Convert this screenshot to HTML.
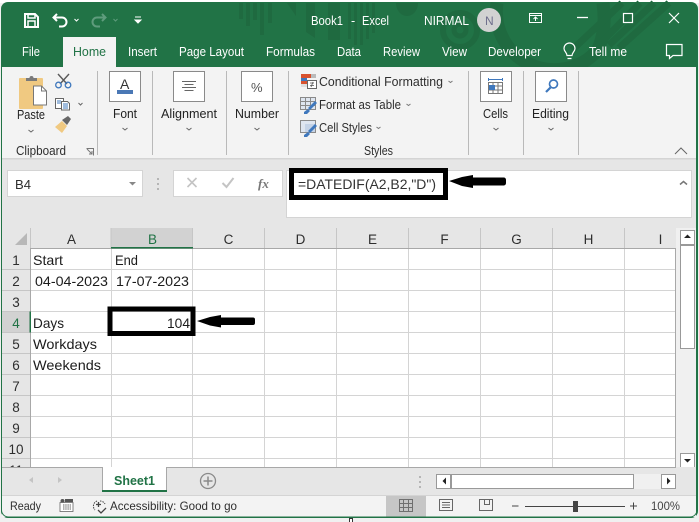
<!DOCTYPE html>
<html lang="en"><head><meta charset="utf-8"><title>Book1 - Excel</title>
<style>
html,body{margin:0;padding:0;background:#f0f0f0;overflow:hidden}
svg{display:block}
text{font-family:"Liberation Sans",sans-serif;font-size:12.5px;fill:#2e2e2e;white-space:pre}
.w text,text.w{fill:#fff}
.cell text{font-size:14px;fill:#1c1c1c}
.h text{font-size:13.5px;fill:#2e2e2e;text-anchor:middle}
</style></head><body>
<svg width="699" height="522" viewBox="0 0 699 522" xmlns="http://www.w3.org/2000/svg">
<rect width="699" height="522" fill="#f0f0f0"/>
<rect x="0" y="0" width="699" height="3" fill="#ffffff"/>
<rect x="1" y="2" width="697" height="516" rx="7" fill="#217346"/>
<rect x="2" y="67" width="694" height="449" fill="#e6e6e6"/>

<!-- title pattern -->
<g fill="#1f6a40">
<rect x="239" y="3" width="4" height="16"/><rect x="246" y="3" width="4" height="23"/><rect x="253" y="3" width="4" height="17"/><rect x="260" y="3" width="4" height="32"/><rect x="268" y="3" width="4" height="20"/>
<path d="M287 3h9v13z"/><path d="M306 3h9v35l-9-6z"/><rect x="328" y="3" width="12" height="37"/>
<rect x="348" y="3" width="3" height="36"/><rect x="354" y="3" width="3" height="42"/><rect x="360" y="3" width="3" height="42"/><rect x="366" y="3" width="3" height="36"/><rect x="372" y="3" width="3" height="30"/>
<path d="M396 3h22a11 13 0 0 1-22 0z"/>
</g>
<g fill="none" stroke="#1f6a40">
<circle cx="460" cy="30" r="17" stroke-width="6"/><circle cx="460" cy="30" r="6" stroke-width="5"/>
<path d="M497 3a58 58 0 0 0 100 48q10-20 6-48" stroke-width="13"/>
<path d="M622 3l-50 47M640 3l-54 55M654 3l-45 42M669 3l-50 45" stroke-width="7"/>
</g>

<!-- qat -->
<g fill="none" stroke="#fff">
<path d="M25 14h10l3 3v10H25z" stroke-width="2"/><path d="M28 14.500h7v3.500h-7zM28 26v-5h7v5" stroke-width="1.500"/>
<path d="M57 14l-3.500 3.500 3.500 3.500M54 17.500h8a4.500 4.500 0 0 1 0 9h-3" stroke-width="2"/>
<path d="M74.500 19l2 2 2-2" stroke-width="1"/>
</g>
<g fill="none" stroke="#5f9c7d">
<path d="M102 14l3.500 3.500-3.500 3.500M105 17.500h-8a4.500 4.500 0 0 0 0 9h3" stroke-width="2"/>
<path d="M113.500 19l2 2 2-2" stroke-width="1"/>
</g>
<path d="M135 17h6M135 20h6l-3 3z" stroke="#fff" fill="#fff" stroke-width="1"/>

<!-- title -->
<g class="w">
<text x="311" y="25" textLength="32" lengthAdjust="spacingAndGlyphs">Book1</text>
<text x="351" y="25">-</text>
<text x="362" y="25" textLength="27" lengthAdjust="spacingAndGlyphs">Excel</text>
<text x="424" y="25" textLength="45" lengthAdjust="spacingAndGlyphs">NIRMAL</text>
</g>
<circle cx="489" cy="20" r="12" fill="#d2d2d2"/>
<text x="485" y="25" style="font-size:12px;fill:#6e6e8c">N</text>
<g fill="none" stroke="#fff" stroke-width="1">
<path d="M529.500 13.500h12v9h-12zM529.500 15.500h12M535.500 21v-4M533.500 19l2-2 2 2"/>
<path d="M577 17.500h11" stroke-width="1.300"/>
<rect x="623.500" y="13.500" width="9" height="9" stroke-width="1.200"/>
<path d="M669 13l10 10M679 13l-10 10" stroke-width="1.200"/>
<path d="M666.500 44.500h15.500v11h-9l-3.500 3v-3h-3z" stroke-width="1.200"/>
<path d="M567 55.500c0-3-3-4-3-7a5.500 5.500 0 0 1 11 0c0 3-3 4-3 7zM567.500 58.500h4" stroke-width="1.200"/>
</g>

<!-- tabs -->
<rect x="63" y="37" width="53" height="31" fill="#f3f3f3"/>
<g class="w">
<text x="22" y="56" textLength="18" lengthAdjust="spacingAndGlyphs">File</text>
<text x="128" y="56" textLength="29" lengthAdjust="spacingAndGlyphs">Insert</text>
<text x="179" y="56" textLength="65" lengthAdjust="spacingAndGlyphs">Page Layout</text>
<text x="266" y="56" textLength="49" lengthAdjust="spacingAndGlyphs">Formulas</text>
<text x="337" y="56" textLength="24" lengthAdjust="spacingAndGlyphs">Data</text>
<text x="383" y="56" textLength="37" lengthAdjust="spacingAndGlyphs">Review</text>
<text x="442" y="56" textLength="25" lengthAdjust="spacingAndGlyphs">View</text>
<text x="488" y="56" textLength="53" lengthAdjust="spacingAndGlyphs">Developer</text>
<text x="589" y="56" textLength="38" lengthAdjust="spacingAndGlyphs">Tell me</text>
</g>
<text x="73" y="56" textLength="33" lengthAdjust="spacingAndGlyphs" style="fill:#217346">Home</text>

<!-- ribbon -->
<rect x="2" y="67" width="694" height="92" fill="#f3f3f3"/>
<rect x="63" y="66" width="53" height="3" fill="#f3f3f3"/>
<rect x="2" y="158" width="694" height="1.500" fill="#d4d4d4"/>
<g fill="#b9b9b9">
<rect x="97" y="71" width="1" height="84"/><rect x="152" y="71" width="1" height="84"/><rect x="226" y="71" width="1" height="84"/><rect x="288" y="71" width="1" height="84"/><rect x="468" y="71" width="1" height="84"/><rect x="523" y="71" width="1" height="84"/><rect x="578" y="71" width="1" height="84"/>
</g>

<!-- paste -->
<rect x="19" y="78" width="24" height="31" rx="1" fill="#f0c981"/>
<path d="M26 81v-3h3.500a2 2 0 0 1 4 0H37v3z" fill="#7a7a7a"/>
<path d="M33.500 86h8l5 5v14h-13z" fill="#fff" stroke="#777" stroke-width="1"/>
<path d="M41.500 86v5h5" fill="none" stroke="#777"/>
<!-- scissors -->
<g fill="none" stroke="#5a5a5a" stroke-width="1.400"><path d="M58 74l9 10M69 74l-9 10"/></g>
<g fill="none" stroke="#3f78bd" stroke-width="1.300"><circle cx="58.500" cy="85" r="2.800"/><circle cx="68" cy="85" r="2.800"/></g>
<!-- copy -->
<g fill="#fff" stroke="#666" stroke-width="1"><path d="M55.500 98.500h8l0 10h-8z"/><path d="M61.500 101.500h6l2 2v6.500h-8z"/></g>
<path d="M57 101h4M57 103h4M63 104h5M63 106h5M63 108h5" stroke="#3f78bd" stroke-width="1"/>
<path d="M78.500 103l2 2 2-2" fill="none" stroke="#666"/>
<!-- painter -->
<path d="M55 127l7-6 5 5-5 7z" fill="#f0c981"/>
<path d="M62 120l6-4 3 3-4 6z" fill="#666"/>

<text x="17" y="119" textLength="28" lengthAdjust="spacingAndGlyphs" style="fill:#222">Paste</text>
<path d="M28.500 130l2.500 2 2.500-2" fill="none" stroke="#666"/>
<text x="16" y="155" textLength="50" lengthAdjust="spacingAndGlyphs">Clipboard</text>
<path d="M86.500 148.500h7v7M87 149l5 5M92 151v3h-3" fill="none" stroke="#777"/>

<!-- big buttons -->
<g fill="#fff" stroke="#8a8a8a" stroke-width="1">
<rect x="109.500" y="71.500" width="31" height="30"/>
<rect x="173.500" y="71.500" width="31" height="30"/>
<rect x="241.500" y="71.500" width="31" height="30"/>
<rect x="480.500" y="71.500" width="31" height="30"/>
<rect x="535.500" y="71.500" width="31" height="30"/>
</g>
<text x="120" y="89" style="font-size:14px;fill:#333">A</text>
<rect x="117" y="90" width="16" height="4" fill="#4a78b5"/>
<path d="M182 81.500h14M184.500 84.500h9M182 87.500h14M184.500 90.500h9" stroke="#666" stroke-width="1"/>
<text x="251" y="92" style="font-size:13px;fill:#555">%</text>
<!-- cells icon -->
<g fill="none" stroke="#777" stroke-width="1"><path d="M488.500 82.500h14v11h-14zM488.500 86h14M488.500 90h14M493 82.500v11M498 82.500v11"/><path d="M488.500 79.500h14M488.500 78v3M502.500 78v3" stroke="#3f78bd"/></g>
<rect x="489" y="85" width="6" height="5" fill="#3f78bd"/>
<!-- search -->
<circle cx="553.500" cy="84" r="4" fill="none" stroke="#3f78bd" stroke-width="1.700"/>
<path d="M550.500 87.500l-4.500 4.500" stroke="#3f78bd" stroke-width="2.200"/>

<text x="113" y="118" textLength="24" lengthAdjust="spacingAndGlyphs" style="fill:#222">Font</text>
<text x="161" y="118" textLength="56" lengthAdjust="spacingAndGlyphs" style="fill:#222">Alignment</text>
<text x="235" y="118" textLength="44" lengthAdjust="spacingAndGlyphs" style="fill:#222">Number</text>
<text x="483" y="118" textLength="25" lengthAdjust="spacingAndGlyphs" style="fill:#222">Cells</text>
<text x="532" y="118" textLength="37" lengthAdjust="spacingAndGlyphs" style="fill:#222">Editing</text>
<g fill="none" stroke="#666"><path d="M122.500 128l2.500 2 2.500-2M186.500 128l2.500 2 2.500-2M254.500 128l2.500 2 2.500-2M493.500 128l2.500 2 2.500-2M548.500 128l2.500 2 2.500-2"/>
<path d="M448.500 81l2 1.500 2-1.500M406.500 104l2 1.500 2-1.500M376.500 127l2 1.500 2-1.500" stroke="#777"/></g>

<!-- styles icons -->
<rect x="301" y="74" width="10" height="4" fill="#d8522f"/><rect x="311" y="74" width="5" height="4" fill="#bbb"/>
<rect x="301" y="78" width="6" height="3" fill="#3f78bd"/><rect x="301" y="81" width="6" height="3" fill="#d8522f"/><rect x="301" y="84" width="6" height="3" fill="#ddd"/>
<rect x="307.500" y="80.500" width="9" height="8" fill="#fff" stroke="#666"/>
<path d="M310 83h4M310 85.500h4M311 87l2-5" stroke="#555" stroke-width=".8" fill="none"/>
<g fill="#dfe6f0" stroke="#8a8a8a" stroke-width="1"><rect x="300.500" y="97.500" width="15" height="12"/><rect x="300.500" y="120.500" width="15" height="12"/></g>
<path d="M300.500 101.500h15M300.500 105.500h15M305.500 97.500v12M310.500 97.500v12" stroke="#8a8a8a" fill="none"/>
<path d="M305 124h10v8h-10z" fill="#c5d3e6"/>
<path d="M308 108l7-7 2 2-7 7zM304 112l4-3 2 2-3 3h-3zM308 131l7-7 2 2-7 7zM304 135l4-3 2 2-3 3h-3z" fill="#3f78bd"/>
<text x="319" y="86" textLength="124" lengthAdjust="spacingAndGlyphs">Conditional Formatting</text>
<text x="319" y="109" textLength="82" lengthAdjust="spacingAndGlyphs">Format as Table</text>
<text x="319" y="132" textLength="53" lengthAdjust="spacingAndGlyphs">Cell Styles</text>
<text x="364" y="155" textLength="29" lengthAdjust="spacingAndGlyphs">Styles</text>
<path d="M675 154l6-6 6 6" fill="none" stroke="#666" stroke-width="1"/>

<!-- formula bar -->
<rect x="7.500" y="170.500" width="135" height="26" fill="#fff" stroke="#d4d4d4"/>
<text x="15" y="189" textLength="16" lengthAdjust="spacingAndGlyphs" style="font-size:13px">B4</text>
<path d="M129 182h7l-3.500 3.500z" fill="#888"/>
<path d="M158 178v2M158 183v2M158 188v2" stroke="#b5b5b5" stroke-width="2"/>
<rect x="173.500" y="170.500" width="109" height="26" fill="#fff" stroke="#d4d4d4"/>
<path d="M187.500 178l9 9M196.500 178l-9 9" stroke="#c4c4c4" stroke-width="1.600"/>
<path d="M222.500 183l4 4 7-9" fill="none" stroke="#c4c4c4" stroke-width="2"/>
<text x="258" y="188" style="font-family:'Liberation Serif',serif;font-style:italic;font-weight:bold;font-size:13px;fill:#777">fx</text>
<rect x="286.500" y="170.500" width="405" height="47" fill="#fff" stroke="#d4d4d4"/>
<path d="M680 184.500l3.500-3 3.500 3" fill="none" stroke="#777" stroke-width="1.500"/>
<text x="298" y="189" textLength="138" lengthAdjust="spacingAndGlyphs" style="font-size:14px;fill:#333">=DATEDIF(A2,B2,"D")</text>
<rect x="291.500" y="170.500" width="154" height="27" fill="none" stroke="#000" stroke-width="5"/>
<path d="M449 181l13-4 11-2v2.500h31a2.500 2.500 0 0 1 2 2.500v3a2.500 2.500 0 0 1-2 2.500h-31v2.500l-11-2z" fill="#000"/>

<!-- grid -->
<rect x="31" y="248" width="644" height="219" fill="#fff"/>
<rect x="2" y="228" width="673" height="20" fill="#e6e6e6"/>
<rect x="2" y="248" width="29" height="219" fill="#e6e6e6"/>
<rect x="111" y="228" width="82" height="20" fill="#d2d2d2"/>
<rect x="2" y="311.500" width="29" height="21" fill="#d2d2d2"/>
<path d="M15 245l12-12v12z" fill="#b8b8b8"/>
<g stroke="#d4d4d4" stroke-width="1" fill="none">
<path d="M111.500 248v219M192.500 248v219M264.500 248v219M336.500 248v219M408.500 248v219M480.500 248v219M552.500 248v219M624.500 248v219"/>
<path d="M31 269.500h644M31 290.500h644M31 311.500h644M31 332.500h644M31 353.500h644M31 374.500h644M31 395.500h644M31 416.500h644M31 437.500h644M31 458.500h644"/>
</g>
<g stroke="#c6c6c6" stroke-width="1" fill="none">
<path d="M30.500 228v20M111 228v20M192.500 228v20M264.500 228v20M336.500 228v20M408.500 228v20M480.500 228v20M552.500 228v20M624.500 228v20"/>
<path d="M2 269.500h29M2 290.500h29M2 311.500h29M2 332.500h29M2 353.500h29M2 374.500h29M2 395.500h29M2 416.500h29M2 437.500h29M2 458.500h29"/>
</g>
<path d="M30.500 248v219M31 248.500h644M675.500 248v219" stroke="#a8a8a8" fill="none" stroke-width="1"/>
<rect x="111" y="247" width="82" height="1.500" fill="#217346"/>
<rect x="29.500" y="311.500" width="1.500" height="21" fill="#217346"/>
<g class="h">
<text x="71.500" y="244">A</text><text x="152.500" y="244" style="fill:#217346">B</text><text x="228.500" y="244">C</text><text x="300.500" y="244">D</text><text x="372.500" y="244">E</text><text x="444.500" y="244">F</text><text x="516.500" y="244">G</text><text x="588.500" y="244">H</text><text x="660.500" y="244">I</text>
<text x="16" y="265">1</text><text x="16" y="286">2</text><text x="16" y="307">3</text><text x="16" y="328" style="fill:#217346">4</text><text x="16" y="349">5</text><text x="16" y="370">6</text><text x="16" y="391">7</text><text x="16" y="412">8</text><text x="16" y="433">9</text><text x="16" y="454">10</text>
</g>
<text x="16" y="475" style="font-size:13.5px;text-anchor:middle">11</text>
<g class="cell">
<text x="33" y="265" textLength="30" lengthAdjust="spacingAndGlyphs">Start</text>
<text x="115" y="265" textLength="23" lengthAdjust="spacingAndGlyphs">End</text>
<text x="35" y="286" textLength="73" lengthAdjust="spacingAndGlyphs">04-04-2023</text>
<text x="116" y="286" textLength="73" lengthAdjust="spacingAndGlyphs">17-07-2023</text>
<text x="33" y="328" textLength="31" lengthAdjust="spacingAndGlyphs">Days</text>
<text x="33" y="349" textLength="64" lengthAdjust="spacingAndGlyphs">Workdays</text>
<text x="33" y="370" textLength="68" lengthAdjust="spacingAndGlyphs">Weekends</text>
<text x="167" y="328" textLength="23" lengthAdjust="spacingAndGlyphs">104</text>
</g>
<rect x="110" y="309" width="83" height="24.500" fill="none" stroke="#000" stroke-width="5"/>
<path d="M197 321l13-4 11-2v2.500h32a2 2 0 0 1 2 2v3.500a2 2 0 0 1-2 2h-32v2.500l-11-2z" fill="#000"/>

<!-- v scrollbar -->
<rect x="676" y="228" width="20" height="239" fill="#f0f0f0"/>
<g fill="#fff" stroke="#999" stroke-width="1">
<rect x="680.500" y="230.500" width="14" height="14"/>
<rect x="680.500" y="245.500" width="14" height="103"/>
<rect x="680.500" y="453.500" width="14" height="14"/>
</g>
<path d="M684 238l3.500-3.500 3.500 3.500zM684 459h7l-3.500 3.500z" fill="#222"/>

<!-- sheet bar -->
<rect x="2" y="467" width="694" height="29" fill="#e6e6e6"/>
<rect x="2" y="467" width="674" height="1" fill="#a8a8a8"/>
<path d="M102.500 467.500v24M166.500 467.500v24" stroke="#a8a8a8"/>
<rect x="103" y="467" width="63" height="23" fill="#fff"/>
<rect x="102" y="490" width="65" height="2" fill="#217346"/>
<text x="114" y="485" textLength="41" lengthAdjust="spacingAndGlyphs" style="font-weight:bold;fill:#217346;font-size:13px">Sheet1</text>
<path d="M33 477l-4 3 4 3zM58 477l4 3-4 3z" fill="#c4c4c4"/>
<circle cx="208" cy="481" r="7.500" fill="none" stroke="#8a8a8a" stroke-width="1.300"/>
<path d="M208 476.500v9M203.500 481h9" stroke="#8a8a8a" stroke-width="1.500"/>
<path d="M420 476v2M420 481v2M420 486v2" stroke="#b5b5b5" stroke-width="2"/>
<rect x="436" y="474" width="240" height="15" fill="#f0f0f0"/>
<g fill="#fff" stroke="#999">
<rect x="436.500" y="474.500" width="14" height="14"/><rect x="451.500" y="474.500" width="182" height="14"/><rect x="661.500" y="474.500" width="14" height="14"/>
</g>
<path d="M446 477.500v7l-3.500-3.500zM667 477.500v7l3.500-3.500z" fill="#222"/>

<!-- status -->
<rect x="2" y="496" width="694" height="21" fill="#f3f3f3"/>
<rect x="2" y="495" width="694" height="1" fill="#d4d4d4"/>
<text x="10" y="510" textLength="31" lengthAdjust="spacingAndGlyphs" style="font-size:12px">Ready</text>
<circle cx="62.500" cy="501" r="2" fill="#555"/>
<rect x="60" y="502.500" width="13" height="9" fill="#fff" stroke="#666" stroke-width=".8"/><rect x="65" y="499" width="8" height="3" fill="#555"/>
<path d="M63 505h8M63 507h8M63 509h8" stroke="#666" stroke-width="1" stroke-dasharray="1.500 .7"/>
<path d="M97 501a5.500 5.500 0 0 0-2 9" fill="none" stroke="#444" stroke-dasharray="1.500 1"/><path d="M100 501a5.500 5.500 0 0 1 5 3" fill="none" stroke="#444" stroke-dasharray="1.500 1"/>
<path d="M98.500 502v5M96 504.500h5M98 510l3 3 5-5" fill="none" stroke="#444" stroke-width="1.300"/>
<text x="110" y="510" textLength="127" lengthAdjust="spacingAndGlyphs" style="font-size:12px">Accessibility: Good to go</text>
<rect x="386" y="496" width="40" height="21" fill="#c6c6c6"/>
<path d="M399.500 499.500h13v12h-13zM399.500 503.500h13M399.500 507.500h13M403.500 499.500v12M408.500 499.500v12" fill="none" stroke="#6f6f6f"/>
<path d="M439.500 499.500h13v11h-13zM442 502.500h8M442 505h8M442 507.500h8" fill="none" stroke="#666" stroke-width="1"/>
<path d="M479.500 499.500h13v11h-13zM484.500 499.500v5h5v-5" fill="none" stroke="#666"/>
<path d="M512 506h6.500M525 506.500h100" stroke="#444" stroke-width="1"/>
<rect x="573" y="501" width="5" height="11" fill="#444"/>
<path d="M630 506h7M633.500 502.500v7" stroke="#444"/>
<text x="651" y="510" textLength="29" lengthAdjust="spacingAndGlyphs" style="font-size:12px;fill:#444">100%</text>

<!-- borders -->
<path d="M1.500 67v443a7 7 0 0 0 7 7H690a7 7 0 0 0 7-7V67" fill="none" stroke="#217346" stroke-width="1"/>
<rect x="349.500" y="518.500" width="3" height="4" fill="#fff" stroke="#333" stroke-width="1"/>
</svg>
</body></html>
